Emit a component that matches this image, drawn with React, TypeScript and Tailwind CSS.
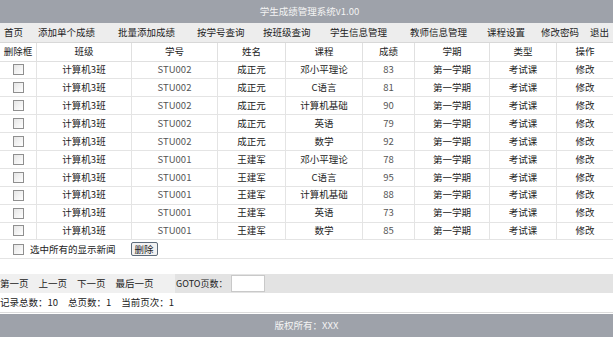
import React from 'react';

const NAV = ['首页', '添加单个成绩', '批量添加成绩', '按学号查询', '按班级查询', '学生信息管理', '教师信息管理', '课程设置', '修改密码', '退出'];

const HEAD = ['删除框', '班级', '学号', '姓名', '课程', '成绩', '学期', '类型', '操作'];

const ROWS = [
  ['STU002', '成正元', '邓小平理论', '83'],
  ['STU002', '成正元', 'C语言', '81'],
  ['STU002', '成正元', '计算机基础', '90'],
  ['STU002', '成正元', '英语', '79'],
  ['STU002', '成正元', '数学', '92'],
  ['STU001', '王建军', '邓小平理论', '78'],
  ['STU001', '王建军', 'C语言', '95'],
  ['STU001', '王建军', '计算机基础', '88'],
  ['STU001', '王建军', '英语', '73'],
  ['STU001', '王建军', '数学', '85'],
];

function Box() {
  return <span className="inline-block w-[11px] h-[11px] border border-[#8f8f8f] bg-gradient-to-br from-[#e6e6e6] to-white align-middle" />;
}

export default function App() {
  const grid = 'grid grid-cols-[36px_95px_86px_68px_77px_52px_75px_67px_57px]';
  return (
    <div className="w-[613px] h-[337px] bg-white text-[#222] text-[9.5px] leading-none overflow-hidden" style={{ fontFamily: '"Noto Sans CJK SC", "Liberation Sans", sans-serif' }}>
      {/* title */}
      <div className="h-[23px] bg-[#9ea2aa] flex items-center justify-center text-[#f4f4f4] pl-[6px]">
        学生成绩管理系统v1.00
      </div>

      {/* nav */}
      <div className="h-[20px] bg-[#ededed] border-b border-[#d8d8d8] grid grid-cols-[34px_80px_79px_66px_67px_80px_77px_54px_49px_1fr] items-center pl-[4px]">
        {NAV.map((n) => (
          <span key={n} className="whitespace-nowrap">{n}</span>
        ))}
      </div>

      {/* table */}
      <div className="border-b border-[#e4e4e4]">
        <div className={`${grid} h-[18.5px] items-stretch`}>
          {HEAD.map((h, i) => (
            <div key={h} className={`flex items-center justify-center border-b border-[#e0e0e0] ${i > 0 ? 'border-l' : ''}`}>{h}</div>
          ))}
        </div>
        {ROWS.map((r, idx) => (
          <div key={idx} className={`${grid} h-[17.9px] items-stretch`}>
            <div className="flex items-center justify-center border-b border-[#e4e4e4]"><Box /></div>
            {['计算机3班', r[0], r[1], r[2], r[3], '第一学期', '考试课', '修改'].map((c, j) => (
              <div key={j} className={`flex items-center justify-center border-l border-b border-[#e4e4e4] ${j === 1 || j === 4 ? 'text-[#555]' : ''}`}>{c}</div>
            ))}
          </div>
        ))}
        <div className="h-[18px] flex items-center pl-[13px] gap-[5px]">
          <Box />
          <span className="ml-[1px]">选中所有的显示新闻</span>
          <button className="ml-[10px] h-[14px] px-[3px] border border-[#5d6b7a] rounded-[2px] bg-[#f2f2f2] text-[9.5px] leading-none">删除</button>
        </div>
      </div>

      {/* pagination */}
      <div className="mt-[15px] h-[19px] flex">
        <div className="w-[175px] bg-[#f0f0f0] flex items-center gap-[10px]">
          <span>第一页</span>
          <span>上一页</span>
          <span>下一页</span>
          <span>最后一页</span>
        </div>
        <div className="flex-1 bg-[#e3e3e3] flex items-center">
          <span className="ml-[1px] text-[9px]">GOTO页数：</span>
          <span className="ml-[4px] w-[34px] h-[17px] bg-white border border-[#c9c9c9]" />
        </div>
      </div>

      <div className="h-[20px] flex items-center gap-[10px] border-b border-[#dcdcdc]">
        <span>记录总数：10</span>
        <span>总页数：1</span>
        <span>当前页次：1</span>
      </div>

      {/* footer */}
      <div className="mt-[1px] h-[23px] bg-[#9ea2aa] flex items-center justify-center text-[#f4f4f4]">
        版权所有：XXX
      </div>
    </div>
  );
}
